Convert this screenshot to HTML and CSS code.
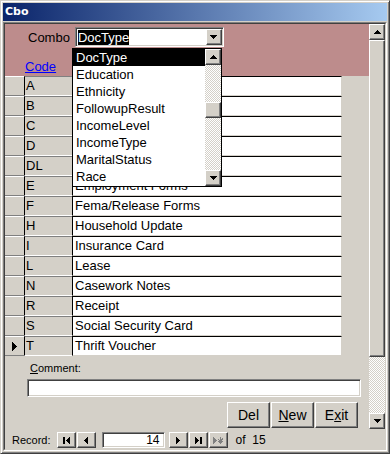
FILE: index.html
```html
<!DOCTYPE html>
<html lang="en">
<head>
    <meta charset="UTF-8">
    <title>Cbo</title>
    <link rel="stylesheet" href="styles.css">
</head>
<body>
<div class="window">
    <div class="titlebar">Cbo</div>
    <div class="client">
        <div class="client-inner">
            <div class="main">
                <div class="form">
                    <div class="header">
                        <div class="combo-row">
                            <span class="combo-label">Combo</span>
                            <div class="combo sunken">
                                <span class="combo-text"><span class="picked">DocType</span></span>
                                <span class="bevel drop-btn">
                                    <svg width="7" height="4"><path d="M0 0h7v1H6v1H5v1H4v1H3V3H2V2H1V1H0z"/></svg>
                                </span>
                            </div>
                        </div>
                        <a class="code-link" href="#">Code</a>
                    </div>

                    <div class="detail">
                        <!-- descriptions of the first rows sit under the open list -->
                        <div class="grid">
                            <div class="row"><div class="sel"></div><div class="code">A</div><div class="desc"></div></div>
                            <div class="row"><div class="sel"></div><div class="code">B</div><div class="desc"></div></div>
                            <div class="row"><div class="sel"></div><div class="code">C</div><div class="desc"></div></div>
                            <div class="row"><div class="sel"></div><div class="code">D</div><div class="desc"></div></div>
                            <div class="row"><div class="sel"></div><div class="code">DL</div><div class="desc"></div></div>
                            <div class="row"><div class="sel"></div><div class="code">E</div><div class="desc">Employment Forms</div></div>
                            <div class="row"><div class="sel"></div><div class="code">F</div><div class="desc">Fema/Release Forms</div></div>
                            <div class="row"><div class="sel"></div><div class="code">H</div><div class="desc">Household Update</div></div>
                            <div class="row"><div class="sel"></div><div class="code">I</div><div class="desc">Insurance Card</div></div>
                            <div class="row"><div class="sel"></div><div class="code">L</div><div class="desc">Lease</div></div>
                            <div class="row"><div class="sel"></div><div class="code">N</div><div class="desc">Casework Notes</div></div>
                            <div class="row"><div class="sel"></div><div class="code">R</div><div class="desc">Receipt</div></div>
                            <div class="row"><div class="sel"></div><div class="code">S</div><div class="desc">Social Security Card</div></div>
                            <div class="row"><div class="sel current"><svg width="5" height="9"><path d="M0 0h1v1h1v1h1v1h1v1h1v1H4v1H3v1H2v1H1v1H0z"/></svg></div><div class="code">T</div><div class="desc">Thrift Voucher</div></div>
                        </div>

                        <div class="comment-label"><u>C</u>omment:</div>
                        <div class="comment-box sunken"></div>

                        <div class="actions">
                            <button class="bevel">Del</button>
                            <button class="bevel"><u>N</u>ew</button>
                            <button class="bevel">E<u>x</u>it</button>
                        </div>
                    </div>

                    <!-- open list of the combo box -->
                    <div class="dropdown">
                        <div class="dd-list">
                            <div class="dd-item active">DocType</div>
                            <div class="dd-item">Education</div>
                            <div class="dd-item">Ethnicity</div>
                            <div class="dd-item">FollowupResult</div>
                            <div class="dd-item">IncomeLevel</div>
                            <div class="dd-item">IncomeType</div>
                            <div class="dd-item">MaritalStatus</div>
                            <div class="dd-item">Race</div>
                        </div>
                        <div class="dd-scroll">
                            <span class="bevel sb-btn"><svg width="7" height="4"><path d="M3 0h1v1h1v1h1v1h1v1H0V3h1V2h1V1h1z"/></svg></span>
                            <span class="track dd-track-top"></span>
                            <span class="bevel dd-thumb"></span>
                            <span class="track grow"></span>
                            <span class="bevel sb-btn"><svg width="7" height="4"><path d="M0 0h7v1H6v1H5v1H4v1H3V3H2V2H1V1H0z"/></svg></span>
                        </div>
                    </div>
                </div>

                <div class="vscroll">
                    <span class="bevel sb-btn"><svg width="7" height="4"><path d="M3 0h1v1h1v1h1v1h1v1H0V3h1V2h1V1h1z"/></svg></span>
                    <span class="bevel sb-thumb"></span>
                    <span class="track grow"></span>
                    <span class="bevel sb-btn"><svg width="7" height="4"><path d="M0 0h7v1H6v1H5v1H4v1H3V3H2V2H1V1H0z"/></svg></span>
                </div>
            </div>

            <div class="navbar">
                <span class="nav-label">Record:</span>
                <span class="bevel nav-btn"><svg width="7" height="7"><path d="M0 0h2v7H0z M6 0h1v7H6V6H5V5H4V4H3V3h1V2h1V1h1z"/></svg></span>
                <span class="bevel nav-btn"><svg width="4" height="7"><path d="M3 0h1v7H3V6H2V5H1V4H0V3h1V2h1V1h1z"/></svg></span>
                <span class="nav-field sunken">14</span>
                <span class="bevel nav-btn next"><svg width="4" height="7"><path d="M0 0h1v1h1v1h1v1h1v1H3v1H2v1H1v1H0z"/></svg></span>
                <span class="bevel nav-btn"><svg width="7" height="7"><path d="M0 0h1v1h1v1h1v1h1v1H3v1H2v1H1v1H0z M5 0h2v7H5z"/></svg></span>
                <span class="bevel nav-btn disabled"><svg width="11" height="7"><path d="M0 0h1v1h1v1h1v1h1v1H3v1H2v1H1v1H0z M7 0h1v2h1V1h1v2H9v1h1v1H9v1H8v1H7V6H6V5H5V4h1V3H5V2h1v1h1z"/></svg></span>
                <span class="nav-of">of&nbsp; 15</span>
            </div>
        </div>
    </div>
</div>
</body>
</html>
```

FILE: styles.css
```css
* {
    box-sizing: border-box;
}
body {
    margin: 0;
    font-family: "Liberation Sans", Arial, sans-serif;
    font-size: 13px;
    color: #000;
    background: #d4d0c8;
}
svg {
    display: block;
    shape-rendering: crispEdges;
}

/* win2000 look */
.bevel {
    background: #d4d0c8;
    border: 1px solid;
    border-color: #fff #404040 #404040 #fff;
    box-shadow: inset -1px -1px #808080;
}
.sunken {
    background: #fff;
    border: 1px solid;
    border-color: #808080 #fff #fff #808080;
    box-shadow: inset 1px 1px #404040, inset -1px -1px #d4d0c8;
}
.track {
    background: repeating-conic-gradient(#fff 0 25%, #d4d0c8 0 50%) 0 0 / 2px 2px;
}
.grow {
    flex: 1;
}

.window {
    width: 390px;
    height: 454px;
    padding: 2px;
    background: #d4d0c8;
    border: 1px solid;
    border-color: #d4d0c8 #404040 #404040 #d4d0c8;
    box-shadow: inset 1px 1px #fff, inset -1px -1px #808080;
    display: flex;
    flex-direction: column;
}
.titlebar {
    height: 18px;
    background: linear-gradient(to right, #0a246a, #a6caf0);
    color: #fff;
    font: bold 11px "DejaVu Sans", sans-serif;
    line-height: 18px;
    padding-left: 2px;
}
.client {
    flex: 1;
    margin-top: 1px;
    border: 1px solid;
    border-color: #808080 #fff #fff #808080;
}
.client-inner {
    height: 100%;
    border: 1px solid;
    border-color: #404040 #d4d0c8 #d4d0c8 #404040;
    display: flex;
    flex-direction: column;
}
.main {
    display: flex;
    height: 405px;
}
.form {
    position: relative;
    width: 364px;
}

/* header */
.header {
    height: 52px;
    background: #bd8c8c;
    padding: 3px 0 0 20px;
}
.combo-row {
    display: flex;
    align-items: center;
    padding-left: 3px;
}
.combo-label {
    margin-right: 5px;
}
.combo {
    width: 149px;
    height: 20px;
    display: flex;
    padding: 2px 1px 1px 2px;
}
.combo-text {
    flex: 1;
    line-height: 15px;
}
.picked {
    background: #000;
    color: #fff;
}
.drop-btn {
    width: 16px;
    height: 16px;
    margin-top: -1px;
    display: flex;
    align-items: center;
    justify-content: center;
}
.code-link {
    display: inline-block;
    margin-top: 12px;
    color: #00f;
    line-height: 15px;
}

/* detail rows */
.grid {
    width: 337px;
}
.row {
    display: flex;
    height: 20px;
}
.sel {
    width: 19px;
    border-top: 1px solid #fff;
    border-bottom: 1px solid #808080;
    display: flex;
    align-items: center;
    padding-left: 7px;
}
.code {
    width: 48px;
    border-left: 1px solid #000;
    border-top: 1px solid #808080;
    border-bottom: 1px solid #fff;
    padding-left: 1px;
    line-height: 18px;
}
.desc {
    flex: 1;
    background: #fff;
    border-left: 1px solid #000;
    border-top: 1px solid #000;
    border-right: 1px solid #d4d0c8;
    border-bottom: 1px solid #d4d0c8;
    padding-left: 2px;
    line-height: 18px;
}
.comment-label {
    margin: 6px 0 0 25px;
    font-size: 11px;
    line-height: 13px;
}
.comment-box {
    margin: 4px 0 0 22px;
    width: 334px;
    height: 18px;
}
.actions {
    display: flex;
    justify-content: flex-end;
    gap: 1px;
    margin-top: 5px;
    padding-right: 11px;
}
.actions button {
    width: 43px;
    height: 26px;
    padding: 0;
    font-family: "Liberation Sans", Arial, sans-serif;
    font-size: 14px;
    color: #000;
}

/* combo list */
.dropdown {
    position: absolute;
    left: 67px;
    top: 24px;
    width: 150px;
    height: 139px;
    border: 1px solid #000;
    background: #fff;
    display: flex;
}
.dd-list {
    flex: 1;
}
.dd-item {
    height: 17px;
    line-height: 17px;
    padding-left: 3px;
}
.dd-item.active {
    background: #000;
    color: #fff;
}
.dd-scroll {
    width: 16px;
    display: flex;
    flex-direction: column;
}
.dd-track-top {
    height: 37px;
}
.dd-thumb {
    height: 16px;
}

/* scrollbars */
.vscroll {
    width: 16px;
    display: flex;
    flex-direction: column;
}
.sb-btn {
    height: 16px;
    display: flex;
    align-items: center;
    justify-content: center;
}
.sb-thumb {
    height: 317px;
}

/* record navigation */
.navbar {
    flex: 1;
    display: flex;
    align-items: flex-start;
    padding: 3px 0 0 7px;
    font-size: 11px;
}
.nav-label {
    line-height: 16px;
    margin-right: 6px;
}
.nav-btn {
    width: 19px;
    height: 16px;
    margin-right: 1px;
    display: flex;
    align-items: center;
    justify-content: center;
}
.nav-btn.disabled path {
    fill: #808080;
}
.nav-field {
    width: 63px;
    height: 16px;
    margin: 0 4px 0 5px;
    text-align: right;
    padding-right: 4px;
    line-height: 15px;
    font-size: 12px;
}
.nav-of {
    margin-left: 7px;
    line-height: 16px;
    font-size: 12px;
}
```
